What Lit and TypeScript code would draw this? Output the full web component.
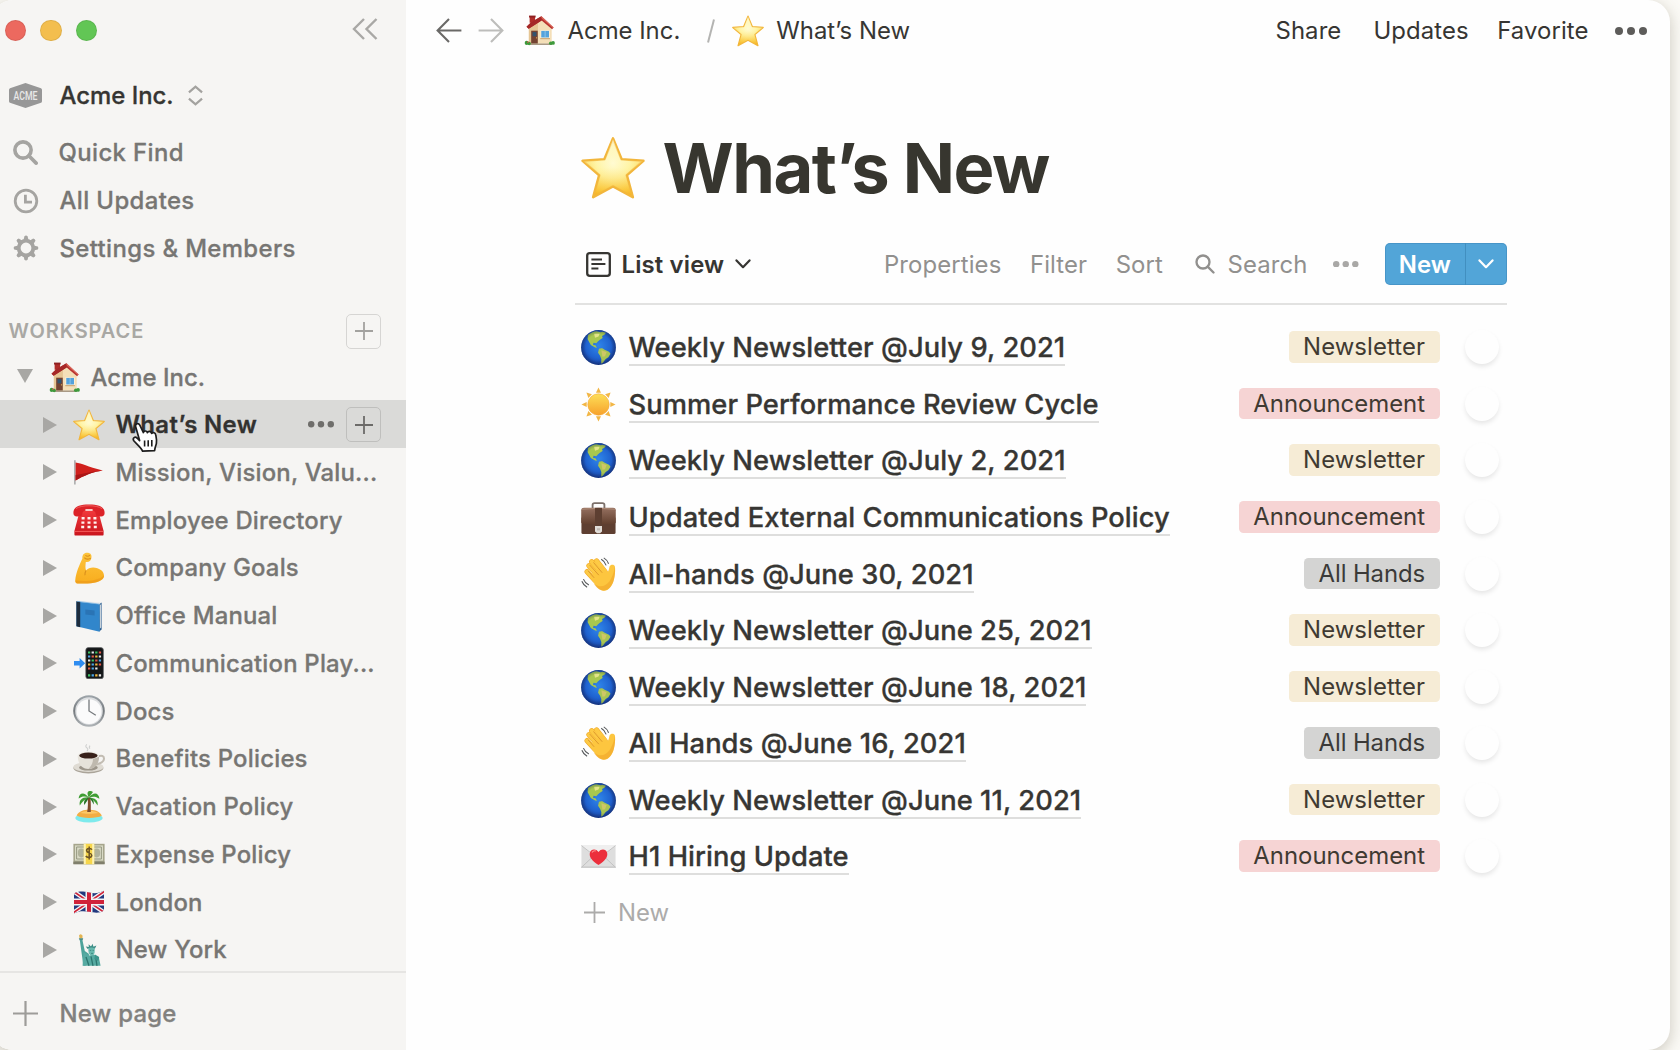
import { LitElement, html, svg, css } from "lit";
import { customElement, property } from "lit/decorators.js";

const star = svg`<defs><radialGradient id="g" cx=".5" cy=".42" r=".6"><stop offset="0" stop-color="#fffce0"/><stop offset=".45" stop-color="#fff3a0"/><stop offset=".8" stop-color="#fdd548"/><stop offset="1" stop-color="#f3b32e"/></radialGradient><linearGradient id="h" x1="0" y1="0" x2="0" y2="1"><stop offset="0" stop-color="#fffde6" stop-opacity=".7"/><stop offset=".5" stop-color="#fff7b0" stop-opacity=".3"/><stop offset="1" stop-color="#f7b51e" stop-opacity=".75"/></linearGradient></defs>
<path d="M16 1.2 L20.3 11.6 L31.2 12.4 L22.9 19.6 L25.9 30.6 L16 25.2 L6.1 30.6 L9.1 19.6 L.8 12.4 L11.7 11.6Z" fill="url(#g)" stroke="#f2b63c" stroke-width="1.3" stroke-linejoin="round"/>
<path d="M16 1.8 L20 12 L30.5 12.8 L22.4 19.5 L25.3 29.8 L16 24.7 L6.7 29.8 L9.6 19.5 L1.5 12.8 L12 12Z" fill="url(#h)"/>`;

const wave = svg`<g fill="none" stroke-linecap="round"><g stroke="#f0a92a" stroke-width="4.8"><path d="M17.5 19 L7.3 8"/><path d="M20 16 L9.8 4.4"/><path d="M22 13.5 L14.2 3.6"/><path d="M12.5 21 L5.6 13.4"/></g><g stroke="#fdca45" stroke-width="3.8"><path d="M17.5 19 L7.3 8"/><path d="M20 16 L9.8 4.4"/><path d="M22 13.5 L14.2 3.6"/><path d="M12.5 21 L5.6 13.4"/></g></g>
<path d="M8 17 L20 7.5 C22 10 23.5 11.8 24.6 13.6 C25.6 12 25.6 10.2 26.2 8.4 C26.8 6.6 30.6 6.4 31 8.6 C31.3 11 31.4 14 30.6 18 C29.6 25 26 30.8 21 30.8 C16.5 30.8 13 27 8 17Z" fill="#fdc63f"/>
<path d="M31 9 C31.8 19 29 30 21 30.8 C17 30.6 14 28 11.5 24 C19 30.5 28 26 31 9Z" fill="#f0a52a" opacity=".6"/>
<path d="M16.3 16.6 L7.8 7.2 M19.4 14.4 L11.4 5 M12 19 L6.4 12.6" stroke="#d8922a" stroke-width=".8" fill="none"/>
<path d="M18.5 2 Q21.8 3.8 23 7.6 M20.8 .8 Q24 2.6 25.2 6.2 M.8 22.2 Q2 25.6 5.6 27.6 M2.2 20.2 Q3.6 23.8 7.2 25.6" stroke="#55585a" stroke-width="1" fill="none"/>`;

const glyphs: Record<string, unknown> = {
  star,
  wave,
  house: svg`<path d="M5.8 1 h5.6 v7 h-5.6z" fill="#b02d2a"/><path d="M5.2.6 h6.8 v2 h-6.8z" fill="#8e2021"/>
<path d="M5 12 L18 3.6 L28.6 13.4 V29.6 H5Z" fill="#f4dfb8"/><path d="M5 12 L14.4 8 V29.6 H5Z" fill="#e6c695"/>
<path d="M18 1.4 L30.6 12.8 L29 14.6 L18.2 5.6 L4.8 14.2 L2.6 12 L7.4 7.4Z" fill="#b8322f"/><path d="M7.4 7.4 L18 1.4 L18.2 5.6 L4.8 14.2 L2.6 12Z" fill="#a52828"/><path d="M18 1.4 L30.6 12.8 L29.8 13.4 L18 3Z" fill="#dc6a5c"/>
<path d="M7.4 16.2 h6.8 v13.4 h-6.8z" fill="#744332"/><path d="M8.8 17.6 h4 v4.4 h-4z" fill="#33536e"/><circle cx="13" cy="23.6" r=".6" fill="#f0c860"/>
<path d="M17 15.8 h9.6 v8 H17z" fill="#fff3dc"/><path d="M17.8 16.4 h8 v6.8 h-8z" fill="#54a2dc"/><path d="M21.8 16.4 v6.8" stroke="#a5d3f2" stroke-width=".7"/><path d="M16.8 23.8 h10 v1.2 h-10z" fill="#cfa878"/>
<path d="M4 29.4 H29 V31 H4z" fill="#a99a86"/><g fill="#3e9a3c"><circle cx="2.8" cy="28.8" r="2.1"/><circle cx="5.4" cy="29.4" r="1.7"/><circle cx="27.6" cy="29.2" r="1.8"/><circle cx="30" cy="28.8" r="1.9"/></g><circle cx="4" cy="28" r=".8" fill="#d7564c"/>`,
  flag: svg`<path d="M1.9 4.2 V28.6" stroke="#989a9b" stroke-width="1.3"/><path d="M2.6 6.6 C9 7.4 14 10.6 29.8 14.6 C19 16 11 20 2.6 24.4Z" fill="#d0201c"/><path d="M2.6 19 C11 18 18 15.6 29.8 14.6 C19 16 11 20 2.6 24.4Z" fill="#ab1616"/>`,
  phone: svg`<defs><linearGradient id="g" x1="0" y1="0" x2="0" y2="1"><stop offset="0" stop-color="#f23a3c"/><stop offset="1" stop-color="#c9151d"/></linearGradient></defs>
<path d="M5.4 12 C5.4 8 9 6 16 6 S26.6 8 26.6 12 L30.6 27 V30.4 Q30.6 31.6 29 31.6 H3 Q1.4 31.6 1.4 30.4 V27Z" fill="url(#g)"/><path d="M1.6 27.4 h28.8" stroke="#ff6b68" stroke-width=".8"/>
<path d="M.4 9 C.4 2.6 6 .4 16 .4 S31.6 2.6 31.6 9 Q31.6 12.4 28 12.4 L25 12.2 Q22.6 12 22.6 9.4 C22.6 7 20 6.4 16 6.4 S9.4 7 9.4 9.4 Q9.4 12 7 12.2 L4 12.4 Q.4 12.4 .4 9Z" fill="#dc2227"/><path d="M3 4.6 C8 .8 24 .8 29 4.6" stroke="#f56a66" stroke-width=".8" fill="none"/>
<path d="M12.4 5 h7.2 v2 h-7.2z" fill="#f6c9c5"/><g fill="#fff2ee"><path d="M8.6 13h3v2.4h-3zM14.5 13h3v2.4h-3zM20.4 13h3v2.4h-3zM8.4 17.4h3v2.4h-3zM14.5 17.4h3v2.4h-3zM20.6 17.4h3v2.4h-3zM8.2 21.8h3v2.4h-3zM14.5 21.8h3v2.4h-3zM20.8 21.8h3v2.4h-3z"/></g>`,
  arm: svg`<defs><linearGradient id="g" x1="0" y1="0" x2="0" y2="1"><stop offset="0" stop-color="#fdc43c"/><stop offset="1" stop-color="#f8ad1e"/></linearGradient></defs>
<path d="M9.4 6.6 C9 3 11 .8 14 .8 C17.6 .8 19 3 18.4 6 C18 9 15.6 10.6 12.8 10 C12.4 13.6 12.2 16 13 18.4 C15.4 15.6 20 14.8 24.4 16.2 C29 17.8 31.4 20.8 31 24.6 C30.4 28.4 24 31.4 14.6 31.4 H4.4 Q2 31.4 2.2 28.6 C3 20 6.4 13.4 9.4 6.6Z" fill="url(#g)"/>
<path d="M11.4 5.6 C12.6 7.4 14.8 7.6 17.8 6.2 M12.4 3.4 Q14.6 5.2 17 3.2 M13 18.4 Q11.4 21.6 12 23.2" fill="none" stroke="#d98f1c" stroke-width="1.1"/><path d="M2.6 28.6 C12 29.6 24 29.6 31 23.6 C30.6 28.4 24 31.4 14.6 31.4 H4.4 Q2.4 31.4 2.6 28.6Z" fill="#e9951a" opacity=".55"/>`,
  book: svg`<path d="M3.4 2 L6 .8 L28.6 2.6 L26.6 4.4Z" fill="#e9ebec"/><path d="M26.4 4.2 L28.6 2.6 V29.6 L26.2 31.6Z" fill="#245a8e"/><path d="M27 5 L28.2 4 V27.4 L27 28.4Z" fill="#c8d2da"/><path d="M3.4 1.4 L26.6 4.2 V31.8 L3.4 26.2Z" fill="#3186cb"/><path d="M3.4 1.2 L7.2 1.8 V27.2 L3.4 26.2Z" fill="#1d2c3c"/><path d="M12.4 9.6 L21.6 10.6 V15.6 L12.4 14.4Z" fill="#2a74b5"/><path d="M4 1.3 L26.6 4.1" stroke="#75b3e2" stroke-width=".7"/>`,
  mobile: svg`<rect x="12.8" y=".6" width="17.6" height="31.2" rx="2.6" fill="#141617"/><rect x="12.8" y=".6" width="17.6" height="31.2" rx="2.6" fill="none" stroke="#66696b" stroke-width=".7"/>
<path d="M1 14 h5.6 v-3 l5.6 5.2 l-5.6 5.2 v-3 H1z" fill="#2f8df0"/>
<g><path fill="#3fc465" d="M15 4.4h2.3v2H15zM22.2 4.4h2.3v2h-2.3zM18.6 12.4h2.3v2h-2.3zM15 27.2h2.3v2.4H15z"/><path fill="#e7e9ea" d="M18.6 4.4h2.3v2h-2.3zM25.8 8.4h2.3v2h-2.3zM15 12.4h2.3v2H15zM22.2 20.4h2.3v2h-2.3zM25.8 27.2h2.3v2.4h-2.3z"/><path fill="#e2574a" d="M25.8 4.4h2.3v2h-2.3zM18.6 8.4h2.3v2h-2.3zM22.2 12.4h2.3v2h-2.3zM15 20.4h2.3v2H15zM25.8 16.4h2.3v2h-2.3z"/><path fill="#4da6e8" d="M15 8.4h2.3v2H15zM25.8 12.4h2.3v2h-2.3zM18.6 16.4h2.3v2h-2.3zM18.6 27.2h2.3v2.4h-2.3zM18.6 20.4h2.3v2h-2.3z"/><path fill="#f0b83e" d="M22.2 8.4h2.3v2h-2.3zM15 16.4h2.3v2H15zM22.2 16.4h2.3v2h-2.3zM22.2 27.2h2.3v2.4h-2.3z"/></g>`,
  clock: svg`<defs><linearGradient id="g" x1="0" y1="0" x2="0" y2="1"><stop offset="0" stop-color="#9fa6ab"/><stop offset=".5" stop-color="#73787c"/><stop offset="1" stop-color="#b0b5b8"/></linearGradient></defs><circle cx="16" cy="16" r="15.8" fill="url(#g)"/><circle cx="16" cy="16" r="13.8" fill="#dcdee0"/><circle cx="16" cy="16.6" r="12.4" fill="#fbfbfb"/><path d="M16 4.4 V16 L22.8 20.2" fill="none" stroke="#75797c" stroke-width="1.3"/>`,
  coffee: svg`<path d="M13.8 1.4 q-2 2 0 3.4 t.2 3.2 M17 2.6 q-1.4 1.8 0 3" fill="none" stroke="#cfd0cf" stroke-width="1.1"/><ellipse cx="15.4" cy="25" rx="15" ry="5.4" fill="#aaa499"/><ellipse cx="15.4" cy="24" rx="15" ry="5" fill="#dfdbd3"/><ellipse cx="15.4" cy="24.6" rx="9.4" ry="3" fill="#9c958a"/>
<path d="M24.6 13.4 Q31 11.4 31 15.6 Q31 20 23 21.4" fill="none" stroke="#c2bcb2" stroke-width="2"/><path d="M4.8 12.6 H26 C26.2 19 23 26 15.4 26 S4.6 19 4.8 12.6Z" fill="#e6e2da"/><path d="M20 14 H26 C26.2 19 23 26 15.4 26 C19 22.4 20.4 19 20 14Z" fill="#bfb9ae"/><ellipse cx="15.4" cy="12.4" rx="10.6" ry="3.8" fill="#eeebe5"/><ellipse cx="15.4" cy="12.6" rx="9.2" ry="3" fill="#38211a"/>`,
  island: svg`<ellipse cx="16" cy="27" rx="13.6" ry="4.6" fill="#7eeaec"/><path d="M3.6 24.6 C6 19.4 12 18.6 17 18.8 C23.6 19 27.6 21.4 28.8 24.8 C24 27.6 8.6 27.8 3.6 24.6Z" fill="#f2ac43"/><path d="M7 22 C11 19.4 21 19.2 25.6 22 C20 23 12 23 7 22Z" fill="#fbc868"/>
<path d="M14.2 21 C15 16 15.2 12 14.6 6.6 L17.4 6.4 C18 12 17.8 17 17.8 21Z" fill="#7d4a2c"/>
<g fill="#3f9d33"><path d="M15.6 6.4 C11 .2 6 2 5.6 7.6 C9 5 12 5 15.6 6.4Z"/><path d="M15.6 6.4 C9 6 5.8 9 6.8 14.6 C9 10.6 12 8.4 15.6 6.4Z"/><path d="M16 6.4 C21 .2 26 2.2 26.4 7.8 C23 5.2 20 5.2 16 6.4Z"/><path d="M16 6.4 C22 6.6 25.6 9.4 24.6 14.6 C22.4 10.6 19.6 8.4 16 6.4Z"/><path d="M15.8 6.6 C12.2 -.6 17 -1 20 1Z"/></g><path d="M15.8 6.4 C12 7.4 10.4 10 11.4 14 C13 11 15 9 15.8 6.4 C18 9 20 11 20.4 13.6 C21.6 10 20 7.6 15.8 6.4Z" fill="#247426"/>`,
  money: svg`<path d="M.4 5.8 H31.6 V26.2 H.4z" fill="#a6a58c"/><path d="M.4 23.6 H31.6 V26.2 H.4z" fill="#807f6c"/><path d="M2 7.4 H30 V22.6 H2z" fill="#d9dac6"/><path d="M3.6 9 H28.4 V21 H3.6z" fill="none" stroke="#8f927b" stroke-width=".9"/><ellipse cx="8.4" cy="15" rx="3.6" ry="4.4" fill="#b0b29a"/><ellipse cx="23.6" cy="15" rx="3.6" ry="4.4" fill="#b0b29a"/><path d="M10.8 5.8 h10.4 V26.2 H10.8z" fill="#f7d64b"/><path d="M10.8 5.8 h2 V26.2 h-2zM19.2 5.8 h2 V26.2 h-2z" fill="#fdf2b4"/><path d="M19 11.6 C17.8 9.8 13.4 10 13.6 12.6 C13.8 15.4 18.8 14.4 18.8 17.4 C18.6 20 14 20 12.8 18 M16.2 8.6 V21.6" fill="none" stroke="#6c5425" stroke-width="1.5"/>`,
  uk: svg`<defs><clipPath id="c"><path d="M1 7.4 C6 4.8 10 5.4 16 6.6 S26 7.4 31 4.8 V24.8 C26 27.4 22 26.8 16 25.8 S6 25 1 27.4Z"/></clipPath></defs><g clip-path="url(#c)"><path d="M0 4 H32 V28 H0z" fill="#22397e"/><path d="M0 5 L32 27 M32 5 L0 27" stroke="#f2f2f5" stroke-width="4.4"/><path d="M0 5 L32 27 M32 5 L0 27" stroke="#cf2338" stroke-width="1.6"/><path d="M16 2 V30 M0 16 H32" stroke="#f2f2f5" stroke-width="7"/><path d="M16 2 V30 M0 16 H32" stroke="#d0223a" stroke-width="4"/></g>`,
  liberty: svg`<path d="M6 1.4 Q8 -1 9.6 1.8 L9.4 4.4 H6.6z" fill="#e3b452"/><path d="M5.8 4.2 H10.2 L9.6 6.2 H6.6z" fill="#4e8c86"/><path d="M6.8 6 L9.4 6 L11.8 17 L16 20 L12.6 31.8 H10.4 L8.6 19Z" fill="#4da39a"/>
<path d="M10.4 18 L16.4 21.4 L21 20.6 L26 24 L27.6 31.8 H9.6Z" fill="#56aaa1"/><path d="M15.4 14.6 C15.4 11.8 21.4 11.4 21.8 14.4 L21.6 19 Q20.6 21.8 18.4 21.6 Q15.8 21 15.4 17Z" fill="#68b9ae"/><path d="M14.6 15 L12.8 12.4 L15.8 13 L15.6 10.2 L18 12.4 L19.6 9.8 L20.4 12.8 L23.4 11.4 L22 14.6 Q18 12.4 14.6 15Z" fill="#3d8d86"/><path d="M13 23 L16 31.8 M18 22.4 L20 31.8 M22.6 23 L24 31.8" stroke="#2c766f" stroke-width="1.3"/><path d="M16.8 16.4 h1.4 M19.6 16.4 h1.2 M18 19.4 h2" stroke="#2f7771" stroke-width=".7"/><path d="M22 20.6 L26.2 23 L25.2 27 L21.4 25Z" fill="#3c948b"/>`,
  globe: svg`<defs><radialGradient id="g" cx=".5" cy=".45" r=".55"><stop offset="0" stop-color="#2f86ea"/><stop offset=".65" stop-color="#1f62cf"/><stop offset="1" stop-color="#1a3f97"/></radialGradient><radialGradient id="h" cx=".5" cy=".5" r=".5"><stop offset=".75" stop-color="#0b1c4c" stop-opacity="0"/><stop offset="1" stop-color="#0b1c4c" stop-opacity=".35"/></radialGradient></defs><circle cx="16" cy="16" r="15.9" fill="url(#g)"/>
<path d="M6.4 4.6 C9 2.6 12 1.4 14 1.2 L18 2 L19.6 1.6 L22.8 2.4 L21.4 4.4 L19.2 5.4 L19.8 7.4 L17.6 8.6 L15.4 10.4 L14 12 L11.4 11.6 L11 13.6 L13.2 14 L14.6 16.2 L13 16 L9 13.6 L7.2 10.6 L6 8.2Z" fill="#a8c84f"/><path d="M12 3.4 L17 3.4 L16 6 L12.8 7Z" fill="#e3e58a"/><path d="M16.4 17.2 C18.6 16 20.4 16.8 21.6 18 L25.6 19.8 L27 21.8 L25 25 L22.6 26.4 L20 30 L18.4 30.8 L18.6 26.6 L17.4 23.6 L15.6 20.8Z" fill="#a9c552"/><path d="M18.6 18.4 L23.4 20.2 L22 24 L19.6 24.4Z" fill="#cfc767"/><circle cx="16" cy="16" r="15.9" fill="url(#h)"/>`,
  sun: svg`<defs><linearGradient id="g" x1="0" y1="0" x2="0" y2="1"><stop offset="0" stop-color="#fddf58"/><stop offset="1" stop-color="#f7a12b"/></linearGradient></defs><g fill="#f2b645">${[0, 45, 90, 135, 180, 225, 270, 315].map(a => svg`<path transform="rotate(${a} 16 16)" d="M16 .4 L18.3 5.2 H13.7Z"/>`)}</g><circle cx="16" cy="16" r="9.8" fill="url(#g)" stroke="#f2a737" stroke-width=".5"/>`,
  briefcase: svg`<defs><linearGradient id="g" x1="0" y1="0" x2="0" y2="1"><stop offset="0" stop-color="#957060"/><stop offset="1" stop-color="#62402f"/></linearGradient></defs><g transform="translate(0 1.4)"><path d="M10.6 6.6 V3 Q10.6 1.4 12.4 1.4 H19.6 Q21.4 1.4 21.4 3 V6.6" fill="none" stroke="#7c706a" stroke-width="1.7"/><rect x=".4" y="14" width="31.2" height="15.6" rx="1.4" fill="#5e3f31"/><path d="M.2 8 Q.2 5.6 2.6 5.6 H29.4 Q31.8 5.6 31.8 8 V19 Q31.8 20.6 28 20.6 H4 Q.2 20.6 .2 19Z" fill="url(#g)"/><path d="M1 7 Q16 5.4 31 7" stroke="#b08c78" stroke-width=".9" fill="none"/><path d="M12.8 5.8 H19.2 V23 H12.8z" fill="#5d3f31"/><path d="M12.8 22.4 H19.2 V27.4 L17.4 29 H14.6 L12.8 27.4Z" fill="#e1ddd8"/><path d="M14.6 24.4 h2.8 v2 h-2.8z" fill="#c0bab4"/></g>`,
  letter: svg`<path d="M.4 6 H31.6 V26 H.4z" fill="#dedede"/><path d="M.4 6 H31.6 L16 19Z" fill="#efefef"/><path d="M.4 26 L12 15 M31.6 26 L20 15 M.4 6 L12 15 M31.6 6 L20 15" stroke="#bebebe" stroke-width=".8"/><path d="M.4 25.2 H31.6 V26.2 H.4z" fill="#c3c3c3"/><path d="M16 23.8 C10 19.6 7.6 16.8 8 13.2 C8.4 9 13.6 8.2 16 11.8 C18.4 8.2 23.6 9 24 13.2 C24.4 16.8 22 19.6 16 23.8Z" fill="#ec2f3c"/><path d="M10 12.4 Q11.4 10.2 13.6 11" stroke="#ff8d8d" stroke-width="1" fill="none"/>`,
};

@customElement("emoji-icon")
export class EmojiIcon extends LitElement {
  @property() name = "star";
  @property({ type: Number }) size = 32;
  static styles = css`:host { display: block; flex: none; line-height: 0; }`;
  render() {
    return html`<svg width=${this.size} height=${this.size} viewBox="0 0 32 32">${glyphs[this.name]}</svg>`;
  }
}

const plus = (s: number, w = 2) => html`<svg width=${s} height=${s} viewBox="0 0 20 20" fill="none" stroke="currentColor" stroke-width=${(w * 20) / s}><path d="M10 0V20M0 10H20" /></svg>`;
const dots = (w: number, r: number) => html`<svg width=${w} height=${r * 2} fill="currentColor"><circle cx=${r} cy=${r} r=${r} /><circle cx=${w / 2} cy=${r} r=${r} /><circle cx=${w - r} cy=${r} r=${r} /></svg>`;
const magnifier = (s: number, w: number) => html`<svg width=${s} height=${s} viewBox="0 0 24 24" fill="none" stroke="currentColor" stroke-width=${w}><circle cx="9.6" cy="9.6" r="7.8" /><path d="M15.2 15.2L22.2 22.2" stroke-linecap="round" /></svg>`;
const chevron = html`<svg width="16" height="10" viewBox="0 0 16 10" fill="none" stroke="currentColor" stroke-width="2.2" stroke-linecap="round" stroke-linejoin="round"><path d="M1.5 1.4L8 8.2L14.5 1.4" /></svg>`;
const arrow = html`<svg width="26" height="25" viewBox="0 0 26 25" fill="none" stroke="currentColor" stroke-width="2.1"><path d="M13 1L1.6 12.5L13 24M1.6 12.5H25.4" /></svg>`;

const clock = html`<svg width="26" height="26" viewBox="0 0 26 26" fill="none" stroke="currentColor" stroke-width="2.8"><circle cx="13" cy="13" r="10.8" /><path d="M12.4 6.8V14.2H19" /></svg>`;
const gear = html`<svg width="26" height="26" viewBox="0 0 26 26"><circle cx="13" cy="13" r="7.3" fill="none" stroke="currentColor" stroke-width="3.8" />${[0, 45, 90, 135, 180, 225, 270, 315].map(a => svg`<path transform="rotate(${a} 13 13)" d="M10.4 5.4 L11.4 1.2 Q13 0 14.6 1.2 L15.6 5.4Z" fill="currentColor"/>`)}</svg>`;

const pages: [string, string][] = [
  ["star", "What’s New"], ["flag", "Mission, Vision, Valu..."], ["phone", "Employee Directory"], ["arm", "Company Goals"],
  ["book", "Office Manual"], ["mobile", "Communication Play..."], ["clock", "Docs"], ["coffee", "Benefits Policies"],
  ["island", "Vacation Policy"], ["money", "Expense Policy"], ["uk", "London"], ["liberty", "New York"],
];
const rows: [string, string, string][] = [
  ["globe", "Weekly Newsletter @July 9, 2021", "Newsletter"],
  ["sun", "Summer Performance Review Cycle", "Announcement"],
  ["globe", "Weekly Newsletter @July 2, 2021", "Newsletter"],
  ["briefcase", "Updated External Communications Policy", "Announcement"],
  ["wave", "All-hands @June 30, 2021", "All Hands"],
  ["globe", "Weekly Newsletter @June 25, 2021", "Newsletter"],
  ["globe", "Weekly Newsletter @June 18, 2021", "Newsletter"],
  ["wave", "All Hands @June 16, 2021", "All Hands"],
  ["globe", "Weekly Newsletter @June 11, 2021", "Newsletter"],
  ["letter", "H1 Hiring Update", "Announcement"],
];

@customElement("app-root")
export class AppRoot extends LitElement {
  static styles = css`
    :host { display: block; width: 1680px; height: 1050px; overflow: hidden; position: relative; background: #fbfaf6; font-family: Inter, "Liberation Sans", sans-serif; font-size: 23.9px; color: #373633; }
    * { box-sizing: border-box; }
    svg { display: block; flex: none; }
    span { white-space: nowrap; }
    .window { display: flex; width: 1679px; height: 1050px; margin-left: -9px; border-radius: 22px; overflow: hidden; background: #fefefe; box-shadow: 0 4px 16px rgba(80, 70, 40, .28); }
    .sidebar { width: 415px; flex: none; display: flex; flex-direction: column; background: #f6f5f3; font-weight: 500; color: #777673; letter-spacing: .2px; }
    .sidebar span, .row .name { -webkit-text-stroke: .3px currentColor; }
    .lights { height: 61px; flex: none; display: flex; align-items: center; padding: 0 28.5px 0 13.5px; gap: 14px; }
    .light { width: 21.5px; height: 21.5px; border-radius: 50%; border: 1px solid rgba(0, 0, 0, .08); }
    .red { background: #ec695f; } .amber { background: #f3be4e; } .green { background: #62c655; }
    .collapse { margin-left: auto; color: #a9a8a5; margin-bottom: 3px; }
    .account { height: 68px; flex: none; display: flex; align-items: center; padding: 1px 0 0 18px; color: #363532; letter-spacing: 0; }
    .account span { margin-left: 17.5px; }
    .account .updown { margin-left: 14px; color: #a3a29f; }
    .item { height: 47.75px; flex: none; display: flex; align-items: center; padding-left: 22px; gap: 20.5px; letter-spacing: .38px; }
    .item svg { color: #a5a4a1; }
    .heading { height: 79.8px; flex: none; display: flex; align-items: center; justify-content: space-between; padding: 38px 25px 0 17.5px; font-size: 20px; font-weight: 600; letter-spacing: .95px; color: #a9a8a4; }
    .heading span { -webkit-text-stroke: 0; }
    .box { width: 35px; height: 35px; border: 1.5px solid #d6d5d3; border-radius: 5px; display: flex; align-items: center; justify-content: center; color: #a3a29f; }
    .tree { flex: 1; min-height: 0; overflow: hidden; }
    .node { height: 47.75px; display: flex; align-items: center; padding: 2px 25px 0 51.5px; }
    .node.root { padding-left: 25.5px; padding-top: 3px; letter-spacing: .05px; }
    .node svg.caret { color: #a8a7a4; }
    .node emoji-icon { margin: 0 10.5px 0 16.5px; }
    .node.root svg.caret { margin-bottom: 2px; }
    .node.root emoji-icon { margin: 0 11px 0 16px; }
    .node.active { background: #dadad8; color: #333230; font-weight: 600; letter-spacing: .4px; }
    .node.active .more { margin-left: auto; margin-right: 12px; color: #6f6e6b; }
    .node.active .box { border-color: #bfbfbd; color: #6c6b69; }
    .foot { height: 79px; flex: none; display: flex; align-items: center; gap: 21.5px; padding: 4px 0 0 22px; border-top: 2px solid #e6e5e3; color: #82817e; }
    .foot svg { color: #9d9c99; }
    .main { flex: 1; min-width: 0; display: flex; flex-direction: column; }
    .topbar { height: 61px; display: flex; align-items: center; padding: 0 23px 0 29.5px; }
    .back { color: #6a6967; } .forward { color: #bdbdbb; transform: scaleX(-1); margin: 0 20px 0 16.5px; }
    .crumb { display: flex; align-items: center; gap: 12.5px; }
    .crumb:last-of-type { letter-spacing: .1px; }
    .slash { color: #b4b4b2; margin: 0 16.5px 0 27px; }
    .actions { margin-left: auto; display: flex; align-items: center; gap: 28.5px; color: #363532; letter-spacing: .1px; }
    .actions span:first-child { margin-right: 3.5px; }
    .actions svg { color: #5d5c5a; margin-left: -2px; }
    .page { width: 932px; margin-left: 169px; }
    .title { display: flex; align-items: center; height: 80px; margin-top: 67px; padding-left: 5.5px; gap: 18px; font-size: 68.6px; font-weight: 700; letter-spacing: -1.5px; color: #37362f; }
    .tools { display: flex; align-items: center; height: 96.5px; padding-top: 17.5px; border-bottom: 2px solid #e2e2e1; color: #91908e; }
    .view { display: flex; align-items: center; padding-left: 11px; gap: 10.5px; font-weight: 600; letter-spacing: .15px; color: #363532; margin-right: auto; }
    .tools .opts { display: flex; align-items: center; gap: 28.5px; letter-spacing: .12px; }
    .search { display: flex; align-items: center; gap: 13px; margin: 0 -3px 0 3px; }
    .tools .dots { color: #a9a8a6; }
    .button { display: flex; margin-left: 26.5px; height: 42.5px; border-radius: 5px; background: #52a5d8; color: #fff; font-weight: 600; box-shadow: inset 0 0 0 1px rgba(20, 80, 130, .18); }
    .button .label { width: 80.5px; display: flex; align-items: center; justify-content: center; border-right: 1px solid #418fc0; }
    .button .drop { width: 41.5px; display: flex; align-items: center; justify-content: center; }
    .list { padding-top: 15px; }
    .row { display: flex; align-items: center; height: 56.58px; padding-left: 6px; font-size: 27.3px; font-weight: 500; letter-spacing: .07px; }
    .row .name { margin-left: 12.5px; line-height: 33px; border-bottom: 2px solid #dededd; margin-top: 2px; }
    .tag { margin: 0 0 1.5px auto; height: 31.5px; line-height: 31.5px; padding: 0 15px 0 14.5px; border-radius: 4.5px; font-size: 23.9px; font-weight: 400; letter-spacing: .08px; color: #403a32; }
    .Newsletter { background: #f6ecd6; } .Announcement { background: #f6d4d4; letter-spacing: 0; } .All { background: #d4d4d3; color: #3b3a38; letter-spacing: -.1px; }
    .avatar { width: 34px; height: 34px; border-radius: 50%; margin: 0 8px 1px 25px; background: #fefefe; box-shadow: 0 3px 5px -.5px rgba(0, 0, 0, .1); }
    .add { display: flex; align-items: center; gap: 13px; height: 50px; padding-left: 9px; color: #acabaa; margin-top: 2px; }
    .cursor { position: absolute; left: 131px; top: 421px; }
  `;

  render() {
    return html`
      <div class="window">
        <div class="sidebar">
          <div class="lights"><i class="light red"></i><i class="light amber"></i><i class="light green"></i>
            <svg class="collapse" width="26" height="22" viewBox="0 0 26 22" fill="none" stroke="currentColor" stroke-width="2.4"><path d="M12 1L2 11L12 21M24.5 1L14.5 11L24.5 21" /></svg>
          </div>
          <div class="account">
            <svg width="33" height="25" viewBox="0 0 33 25"><path d="M16.5 0L32 5.2Q33 5.6 33 7V18Q33 19.4 32 19.8L16.5 25L1 19.8Q0 19.4 0 18V7Q0 5.6 1 5.2Z" fill="#979797" /><text x="4.5" y="17.4" font-family="Roboto, sans-serif" font-size="13.5" font-weight="500" textLength="24" lengthAdjust="spacingAndGlyphs" fill="#e8e8e8">ACME</text></svg>
            <span>Acme Inc.</span>
            <svg class="updown" width="15" height="21" viewBox="0 0 16 22" fill="none" stroke="currentColor" stroke-width="2.4"><path d="M1 7.6L8 1.6L15 7.6M1 14.4L8 20.4L15 14.4" /></svg>
          </div>
          <div class="item">${magnifier(25, 3.5)}<span>Quick Find</span></div>
          <div class="item">${clock}<span>All Updates</span></div>
          <div class="item">${gear}<span>Settings &amp; Members</span></div>
          <div class="heading"><span>WORKSPACE</span><div class="box">${plus(18, 1.8)}</div></div>
          <div class="tree">
            <div class="node root"><svg class="caret" width="16" height="14" fill="currentColor"><path d="M0 0H16L8 14Z" /></svg><emoji-icon name="house" size="31"></emoji-icon><span>Acme Inc.</span></div>
            ${pages.map(([icon, name], i) => html`<div class="node ${i === 0 ? "active" : ""}">
              <svg class="caret" width="14" height="16" fill="currentColor"><path d="M0 0V16L14 8Z" /></svg><emoji-icon name=${icon} size="32"></emoji-icon><span>${name}</span>
              ${i === 0 ? html`<div class="more">${dots(26, 3.2)}</div><div class="box">${plus(18, 1.8)}</div>` : ""}
            </div>`)}
          </div>
          <div class="foot">${plus(25, 2.2)}<span>New page</span></div>
        </div>
        <div class="main">
          <div class="topbar">
            <div class="back">${arrow}</div><div class="forward">${arrow}</div>
            <div class="crumb"><emoji-icon name="house" size="31"></emoji-icon><span>Acme Inc.</span></div>
            <svg class="slash" width="8" height="24" fill="none" stroke="currentColor" stroke-width="2"><path d="M7 0.5L1 23.5" /></svg>
            <div class="crumb"><emoji-icon name="star" size="32"></emoji-icon><span>What’s New</span></div>
            <div class="actions"><span>Share</span><span>Updates</span><span>Favorite</span>${dots(32, 4)}</div>
          </div>
          <div class="page">
            <div class="title"><emoji-icon name="star" size="64"></emoji-icon><span>What’s New</span></div>
            <div class="tools">
              <div class="view">
                <svg width="25" height="25" viewBox="0 0 25 25" fill="none" stroke="currentColor"><rect x="1.2" y="1.2" width="22.6" height="22.6" rx="2.6" stroke-width="2.3" /><path d="M5.4 7.4H16M5.4 12H19.4M5.4 16.6H12.4" stroke-width="2" /></svg>
                <span>List view</span>${chevron}
              </div>
              <div class="opts"><span>Properties</span><span>Filter</span><span>Sort</span><div class="search">${magnifier(20, 2.8)}<span>Search</span></div><div class="dots">${dots(25.5, 3.2)}</div></div>
              <div class="button"><div class="label"><span>New</span></div><div class="drop">${chevron}</div></div>
            </div>
            <div class="list">
              ${rows.map(([icon, name, tag]) => html`<div class="row"><emoji-icon name=${icon} size="35"></emoji-icon><span class="name">${name}</span><span class="tag ${tag.split(" ")[0]}">${tag}</span><i class="avatar"></i></div>`)}
              <div class="add">${plus(21, 1.8)}<span>New</span></div>
            </div>
          </div>
        </div>
      </div>
      <svg class="cursor" width="29" height="33" viewBox="0 0 29 33"><path d="M8.6 19.6 L4.6 5.6 C4 2.6 7.4 1.4 8.8 4.2 L12.4 11.6 C13 9.6 15.6 9.4 16.4 11.6 C17.2 9.8 20 10 20.6 12.4 C22 11 24.4 11.6 24.8 14 C25.4 17 26 19.6 25.4 22.4 C25 24.6 24 26 23.6 29.6 L11.6 30.2 C10.8 27 5 22.6 2.6 19.4 C1.4 17 4 15.2 6 17Z" fill="#fff" stroke="#1d1d1d" stroke-width="1.7" stroke-linejoin="round" /><path d="M13.6 19.4V25.6M17.2 19.2V25.6M20.8 19V25.6" stroke="#1d1d1d" stroke-width="1.6" /></svg>
    `;
  }
}
